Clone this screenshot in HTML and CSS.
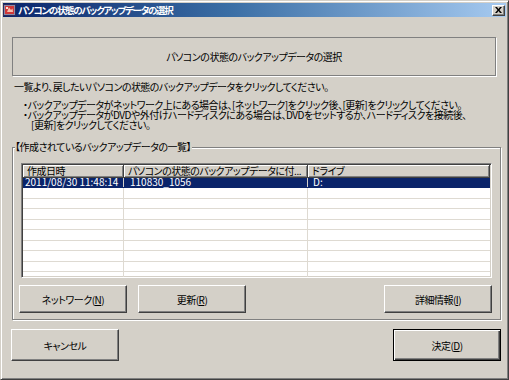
FILE: index.html
```html
<!DOCTYPE html>
<html lang="ja">
<head>
<meta charset="utf-8">
<link rel="stylesheet" href="styles.css">
</head>
<body>
<div class="window">
  <div class="titlebar">
    <svg class="appicon" width="13" height="12" viewBox="0 0 13 12">
      <rect x="0.5" y="0.5" width="12" height="11" fill="#8a8aa8" stroke="#2a2a5a"/>
      <rect x="2" y="2" width="9" height="8" fill="#d03838"/>
      <path d="M4 8 L6 3.5 L8 6 L9.5 4.5 L10 8 Z" fill="#f4c0b0"/>
      <rect x="3" y="3" width="2" height="2" fill="#ffe0d0"/>
    </svg>
    <span class="title">パソコンの状態のバックアップデータの選択</span>
    <span class="close">
      <svg width="7" height="6" viewBox="0 0 7 6"><path d="M0 0h2l1.5 2L5 0h2L4.5 3 7 6H5L3.5 4 2 6H0l2.5-3z" fill="#000"/></svg>
    </span>
  </div>
  <div class="content">
    <div class="headbox">パソコンの状態のバックアップデータの選択</div>
    <p class="intro">一覧より、戻したいパソコンの状態のバックアップデータをクリックしてください。</p>
    <div class="notes">
      <div>・バックアップデータがネットワーク上にある場合は、[ネットワーク]をクリック後、[更新]をクリックしてください。</div>
      <div>・バックアップデータがDVDや外付けハードディスクにある場合は、DVDをセットするか、ハードディスクを接続後、</div>
      <div class="indent">[更新]をクリックしてください。</div>
    </div>
    <div class="group">
      <span class="legend">【作成されているバックアップデータの一覧】</span>
      <div class="list">
        <div class="lhead">
          <div class="hcell c1">作成日時</div>
          <div class="hcell c2">パソコンの状態のバックアップデータに付...</div>
          <div class="hcell c3">ドライブ</div>
        </div>
        <div class="row sel">
          <div class="cell c1"><span>2011/08/30 11:48:14</span></div>
          <div class="cell c2"><span>110830_1056</span></div>
          <div class="cell c3"><span>D:</span></div>
        </div>
        <div class="row"><div class="cell c1"></div><div class="cell c2"></div><div class="cell c3"></div></div>
        <div class="row"><div class="cell c1"></div><div class="cell c2"></div><div class="cell c3"></div></div>
        <div class="row"><div class="cell c1"></div><div class="cell c2"></div><div class="cell c3"></div></div>
        <div class="row"><div class="cell c1"></div><div class="cell c2"></div><div class="cell c3"></div></div>
        <div class="row"><div class="cell c1"></div><div class="cell c2"></div><div class="cell c3"></div></div>
        <div class="row"><div class="cell c1"></div><div class="cell c2"></div><div class="cell c3"></div></div>
        <div class="row"><div class="cell c1"></div><div class="cell c2"></div><div class="cell c3"></div></div>
        <div class="row"><div class="cell c1"></div><div class="cell c2"></div><div class="cell c3"></div></div>
        <div class="row"><div class="cell c1"></div><div class="cell c2"></div><div class="cell c3"></div></div>
      </div>
      <div class="gbuttons">
        <button class="btn">ネットワーク(<u>N</u>)</button>
        <button class="btn">更新(<u>R</u>)</button>
        <button class="btn push">詳細情報(<u>I</u>)</button>
      </div>
    </div>
    <div class="footer">
      <button class="btn big">キャンセル</button>
      <button class="btn big default">決定(<u>D</u>)</button>
    </div>
  </div>
</div>
</body>
</html>
```
FILE: styles.css
```css
* { box-sizing: border-box; }
html, body { margin: 0; padding: 0; }
body {
  background: #d4d0c8;
  font-family: "Noto Sans CJK JP", "Liberation Sans", sans-serif;
  font-size: 10px;
  color: #000;
  font-feature-settings: "palt";
}
.window {
  width: 509px;
  height: 380px;
  background: #d4d0c8;
  border: 1px solid;
  border-color: #d4d0c8 #404040 #404040 #d4d0c8;
  box-shadow: inset 1px 1px #fff, inset -1px -1px #808080;
  padding: 2px;
  display: flex;
  flex-direction: column;
  overflow: hidden;
}
.titlebar {
  height: 14px;
  flex: none;
  background: linear-gradient(to right, #0a246a 0%, #3a6ea5 45%, #a6caf0 100%);
  display: flex;
  align-items: center;
  padding: 0 1px 0 0;
  color: #fff;
  font-weight: bold;
  font-size: 9.5px;
}
.appicon { flex: none; display: block; }
.title { margin-left: 2px; line-height: 14px; white-space: nowrap; letter-spacing: -1.3px; }
.close {
  margin-left: auto;
  width: 13px;
  height: 11px;
  background: #d4d0c8;
  border: 1px solid;
  border-color: #fff #404040 #404040 #fff;
  box-shadow: inset -1px -1px #808080;
  display: flex;
  align-items: center;
  justify-content: center;
}
.close svg { display: block; }
.content {
  padding: 0 0 0 8px;
  display: flex;
  flex-direction: column;
}
.headbox {
  margin: 20px 0 0 1px;
  width: 484px;
  height: 39px;
  border: 1px solid #808080;
  box-shadow: 1px 1px 0 #fff;
  display: flex;
  align-items: center;
  justify-content: center;
  padding-bottom: 1px;
  letter-spacing: -0.5px;
}
.intro {
  margin: 5px 0 0 3px;
  line-height: 12px;
  white-space: nowrap;
  letter-spacing: -0.55px;
}
.notes {
  margin: 7px 0 0 12px;
  line-height: 10px;
  white-space: nowrap;
  letter-spacing: -0.5px;
}
.notes .indent { padding-left: 8px; }
.group {
  position: relative;
  margin: 17px 0 0 1px;
  width: 489px;
  height: 173px;
  border: 1px solid #808080;
  box-shadow: inset 1px 1px #fff, 1px 1px 0 #fff;
  padding: 15px 0 0 8px;
}
.legend {
  position: absolute;
  top: -7px;
  left: 2px;
  background: #d4d0c8;
  line-height: 12px;
  padding-right: 1px;
  white-space: nowrap;
  letter-spacing: -0.5px;
}
.list {
  width: 471px;
  height: 115px;
  background: #fff;
  border: 1px solid;
  border-color: #808080 #fff #fff #808080;
  box-shadow: inset 1px 1px #404040, inset -1px -1px #d4d0c8;
  padding: 1px;
  overflow: hidden;
  font-size: 10px;
}
.lhead, .row {
  display: grid;
  grid-template-columns: 101px 184px 1fr;
}
.lhead { height: 13px; }
.hcell {
  background: #d4d0c8;
  border-right: 1px solid #404040;
  border-bottom: 1px solid #404040;
  box-shadow: inset 1px 1px #fff, inset -1px -1px #808080;
  line-height: 12px;
  padding-left: 4px;
  white-space: nowrap;
  letter-spacing: -0.5px;
}
.row {
  height: 10.45px;
  border-bottom: 1px solid #dedad2;
}
.cell {
  border-right: 1px solid #dedad2;
  line-height: 9.5px;
  white-space: nowrap;
}
.cell.c3 { border-right: none; }
.row.sel { background: #0a246a; color: #fff; border-bottom-color: #0a246a; }
.row.sel .cell { border-right-color: #d4d0c8; line-height: 7px; }
.row.sel .c1 span { padding-left: 2px; }
.row.sel .c2 span { padding-left: 6px; }
.row.sel .c3 span { padding-left: 5px; }
.gbuttons {
  display: flex;
  margin: 7px 0 0 -2px;
}
.btn {
  font-family: inherit;
  font-size: 10px;
  font-feature-settings: "palt";
  letter-spacing: -0.5px;
  color: #000;
  width: 108px;
  height: 28px;
  background: #d4d0c8;
  border: 1px solid;
  border-color: #fff #404040 #404040 #fff;
  box-shadow: inset -1px -1px #808080;
  padding: 0;
  display: flex;
  align-items: center;
  justify-content: center;
}
.btn u { text-decoration: underline; }
.gbuttons .btn + .btn { margin-left: 11px; }
.gbuttons .btn.push { margin-left: 138px; }
.footer {
  display: flex;
  justify-content: space-between;
  width: 490px;
  margin-top: 9px;
}
.btn.big { height: 32px; }
.btn.default {
  border: 1px solid #000;
  box-shadow: inset 1px 1px #fff, inset -1px -1px #404040, inset -2px -2px #808080;
}
```
